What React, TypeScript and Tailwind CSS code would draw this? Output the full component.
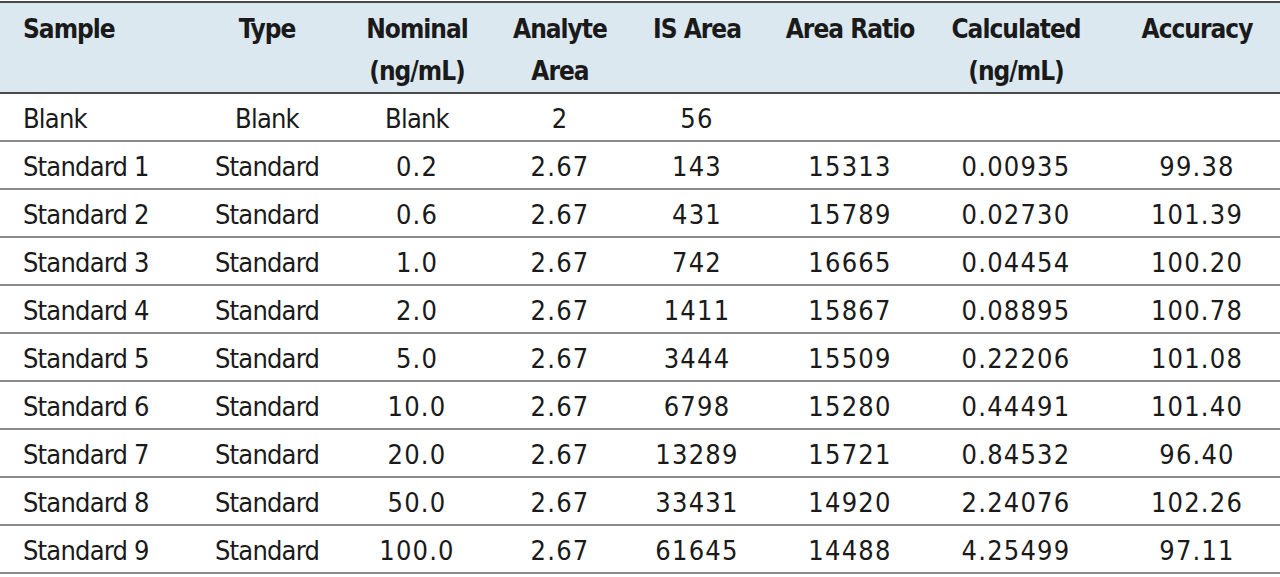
const columns = [
  { key: 'sample', label: ['Sample'], width: 'w-[192px]', align: 'text-left pl-[23px]' },
  { key: 'type', label: ['Type'], width: 'w-[150px]', align: 'text-center' },
  { key: 'nominal', label: ['Nominal', '(ng/mL)'], width: 'w-[150px]', align: 'text-center' },
  { key: 'analyte', label: ['Analyte', 'Area'], width: 'w-[136px]', align: 'text-center' },
  { key: 'is', label: ['IS Area'], width: 'w-[138px]', align: 'text-center' },
  { key: 'ratio', label: ['Area Ratio'], width: 'w-[168px]', align: 'text-center' },
  { key: 'calc', label: ['Calculated', '(ng/mL)'], width: 'w-[164px]', align: 'text-center' },
  { key: 'acc', label: ['Accuracy'], width: 'w-[182px]', align: 'text-center pl-4' },
];

const rows: string[][] = [
  ['Blank', 'Blank', 'Blank', '2', '56', '', '', ''],
  ['Standard 1', 'Standard', '0.2', '2.67', '143', '15313', '0.00935', '99.38'],
  ['Standard 2', 'Standard', '0.6', '2.67', '431', '15789', '0.02730', '101.39'],
  ['Standard 3', 'Standard', '1.0', '2.67', '742', '16665', '0.04454', '100.20'],
  ['Standard 4', 'Standard', '2.0', '2.67', '1411', '15867', '0.08895', '100.78'],
  ['Standard 5', 'Standard', '5.0', '2.67', '3444', '15509', '0.22206', '101.08'],
  ['Standard 6', 'Standard', '10.0', '2.67', '6798', '15280', '0.44491', '101.40'],
  ['Standard 7', 'Standard', '20.0', '2.67', '13289', '15721', '0.84532', '96.40'],
  ['Standard 8', 'Standard', '50.0', '2.67', '33431', '14920', '2.24076', '102.26'],
  ['Standard 9', 'Standard', '100.0', '2.67', '61645', '14488', '4.25499', '97.11'],
];

// numbers in the source font are wider than DejaVu's, letters are narrower
const isNumber = (v: string) => /^[\d.]+$/.test(v);

export default function App() {
  return (
    <div className="w-[1280px] h-[577px] bg-white text-[#1a1a1a] overflow-hidden pt-[1px] font-['DejaVu_Sans_Condensed','DejaVu_Sans',sans-serif]">
      {/* header */}
      <div className="flex border-t-2 border-b-2 border-[#4a4a4a] bg-[#dce8ef] pt-[5px] font-bold text-[26px] leading-[42px] tracking-[-1px]">
        {columns.map((c) => (
          <div key={c.key} className={`${c.width} ${c.align}`}>
            {c.label.map((l) => (
              <div key={l}>{l}</div>
            ))}
          </div>
        ))}
      </div>

      {/* body */}
      {rows.map((r, i) => (
        <div
          key={i}
          className="flex h-[48px] items-center pt-[4px] border-b-2 border-[#8c8c8c] text-[27px]"
        >
          {columns.map((c, j) => (
            <div
              key={c.key}
              className={`${c.width} ${c.align} ${isNumber(r[j]) ? 'tracking-[1.2px]' : 'tracking-[-0.8px]'}`}
            >
              {r[j]}
            </div>
          ))}
        </div>
      ))}
    </div>
  );
}
